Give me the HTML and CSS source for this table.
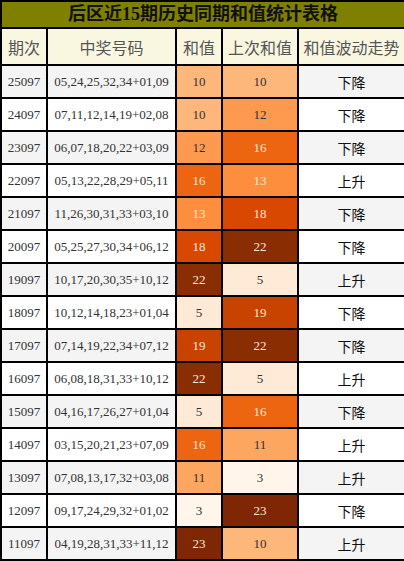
FILE: index.html
```html
<!DOCTYPE html>
<html lang="zh">
<head>
  <meta charset="UTF-8">
  <title>后区近15期历史同期和值统计表格</title>
  <link rel="stylesheet" href="styles.css">
</head>
<body>

<table class="stats">
  <colgroup>
    <col class="c-issue">
    <col class="c-nums">
    <col class="c-sum">
    <col class="c-prev">
    <col class="c-trend">
  </colgroup>
  <thead>
    <tr><th colspan="5" class="title">后区近15期历史同期和值统计表格</th></tr>
    <tr class="head">
      <th>期次</th>
      <th>中奖号码</th>
      <th>和值</th>
      <th>上次和值</th>
      <th>和值波动走势</th>
    </tr>
  </thead>
  <tbody id="rows">
    <!-- rows filled by script -->
  </tbody>
</table>

<script>
  const data = [
    ['25097', '05,24,25,32,34+01,09', 10, 10, '下降'],
    ['24097', '07,11,12,14,19+02,08', 10, 12, '下降'],
    ['23097', '06,07,18,20,22+03,09', 12, 16, '下降'],
    ['22097', '05,13,22,28,29+05,11', 16, 13, '上升'],
    ['21097', '11,26,30,31,33+03,10', 13, 18, '下降'],
    ['20097', '05,25,27,30,34+06,12', 18, 22, '下降'],
    ['19097', '10,17,20,30,35+10,12', 22, 5, '上升'],
    ['18097', '10,12,14,18,23+01,04', 5, 19, '下降'],
    ['17097', '07,14,19,22,34+07,12', 19, 22, '下降'],
    ['16097', '06,08,18,31,33+10,12', 22, 5, '上升'],
    ['15097', '04,16,17,26,27+01,04', 5, 16, '下降'],
    ['14097', '03,15,20,21,23+07,09', 16, 11, '上升'],
    ['13097', '07,08,13,17,32+03,08', 11, 3, '上升'],
    ['12097', '09,17,24,29,32+01,02', 3, 23, '下降'],
    ['11097', '04,19,28,31,33+11,12', 23, 10, '上升']
  ];

  const tbody = document.getElementById('rows');
  data.forEach(function (d) {
    const tr = tbody.insertRow();
    tr.innerHTML = `
      <td>${d[0]}</td>
      <td>${d[1]}</td>
      <td class="heat s${d[2]}">${d[2]}</td>
      <td class="heat s${d[3]}">${d[3]}</td>
      <td class="trend">${d[4]}</td>
    `;
  });
</script>

</body>
</html>
```

FILE: styles.css
```css
body {
  margin: 0;
  background: #fff;
}
.stats {
  width: 404px;
  border-collapse: collapse;
  table-layout: fixed;
  font-family: "Liberation Serif", "DejaVu Serif", serif;
}
.c-issue { width: 46px; }
.c-nums { width: 129px; }
.c-sum { width: 46px; }
.c-prev { width: 76px; }
.c-trend { width: 107px; }

.stats th, .stats td {
  border: 2px solid #000;
  text-align: center;
  padding: 0;
  white-space: nowrap;
}
.title {
  height: 25px;
  background: #808000;
  color: #111;
  font-family: "Liberation Serif", "Noto Sans CJK SC", serif;
  font-size: 18px;
  font-weight: bold;
  line-height: 25px;
}
.head th {
  height: 35px;
  background: #f9f7e0;
  color: #555;
  font-family: "Noto Sans CJK SC", sans-serif;
  font-size: 16px;
  font-weight: normal;
}

.stats td {
  height: 31px;
  font-size: 13px;
  color: #333;
}
.stats tbody tr:nth-child(odd) {
  background: #f4f4f4;
}
.stats tbody tr:nth-child(even) {
  background: #fff;
}
.stats td.trend {
  font-family: "Noto Sans CJK SC", sans-serif;
  font-size: 14px;
  color: #111;
}

/* heat colours for sum values */
.stats td.s3 { background: #fff5eb; }
.stats td.s5 { background: #feead6; }
.stats td.s10 { background: #fdb77a; }
.stats td.s11 { background: #fda660; }
.stats td.s12 { background: #fd9a4f; }
.stats td.s13 { background: #fd8e3d; color: #fbe6d4; }
.stats td.s16 { background: #ee6511; color: #fbe6d4; }
.stats td.s18 { background: #d84801; color: #fbe6d4; }
.stats td.s19 { background: #c84200; color: #fbe6d4; }
.stats td.s22 { background: #8a2d03; color: #fbe6d4; }
.stats td.s23 { background: #7f2704; color: #fbe6d4; }
```
